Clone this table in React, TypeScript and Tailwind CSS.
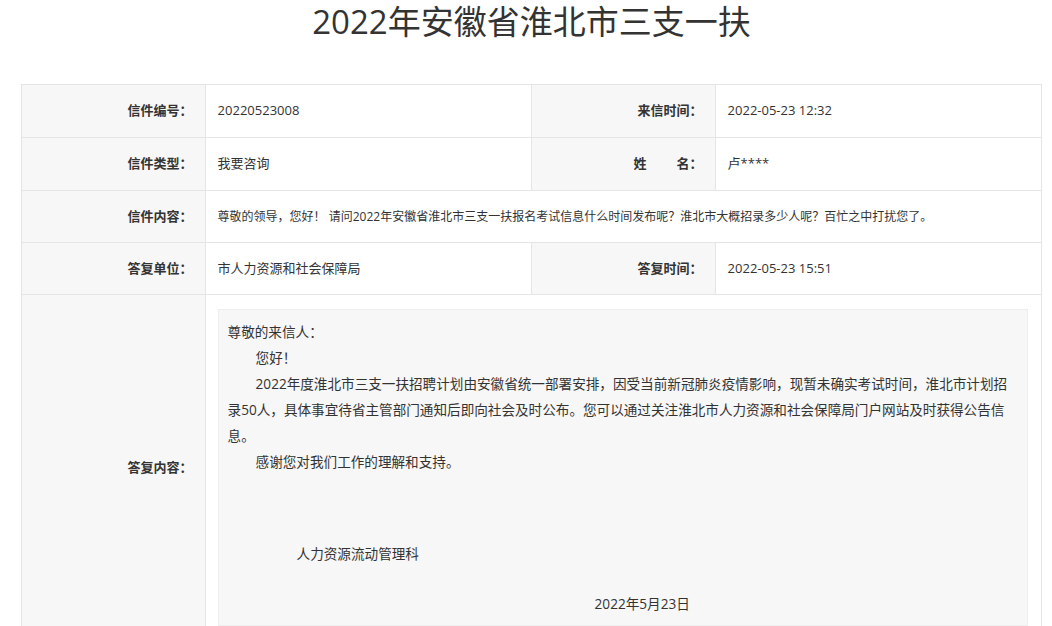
export default function App() {
  const label =
    "bg-[#f7f7f7] text-right pr-[12px] font-bold text-[13px] text-[#333] border border-[#e5e5e5] align-middle whitespace-nowrap";
  const value =
    "bg-white text-left pl-[12px] text-[13px] text-[#333] border border-[#e5e5e5] align-middle whitespace-nowrap";
  return (
    <div className="min-h-[660px] bg-white font-['Open_Sans','Noto_Sans_CJK_SC',sans-serif] text-[#333]">
      <div className="ml-[21px] w-[1021px]">
        <h1 className="text-center text-[33px] leading-[44px] font-normal text-[#333] mb-[40px]">
          2022年安徽省淮北市三支一扶
        </h1>
        <table className="w-full table-fixed border-collapse">
          <colgroup>
            <col className="w-[18%]" />
            <col className="w-[32%]" />
            <col className="w-[18%]" />
            <col className="w-[32%]" />
          </colgroup>
          <tbody>
            <tr className="h-[53px]">
              <td className={label}>信件编号：</td>
              <td className={value}>20220523008</td>
              <td className={label}>来信时间：</td>
              <td className={value}>2022-05-23 12:32</td>
            </tr>
            <tr className="h-[53px]">
              <td className={label}>信件类型：</td>
              <td className={value}>我要咨询</td>
              <td className={label}>
                姓<span className="inline-block w-[30px]"></span>名：
              </td>
              <td className={value}>卢****</td>
            </tr>
            <tr className="h-[52px]">
              <td className={label}>信件内容：</td>
              <td className={value + " !text-[12px]"} colSpan={3}>
                尊敬的领导，您好！ 请问2022年安徽省淮北市三支一扶报名考试信息什么时间发布呢？淮北市大概招录多少人呢？百忙之中打扰您了。
              </td>
            </tr>
            <tr className="h-[52px]">
              <td className={label}>答复单位：</td>
              <td className={value}>市人力资源和社会保障局</td>
              <td className={label}>答复时间：</td>
              <td className={value}>2022-05-23 15:51</td>
            </tr>
            <tr>
              <td className={label}>答复内容：</td>
              <td
                className="bg-white border border-[#e5e5e5] pl-[12px] pr-[13px] pt-[14px] pb-[14px] align-top"
                colSpan={3}
              >
                <div className="bg-[#f7f7f7] border border-[#eeeeee] px-[9px] pt-[9px] pb-[8px] text-[13.6px] leading-[26px] text-[#333] whitespace-nowrap">
                  <div>尊敬的来信人：</div>
                  <div className="pl-[28px]">您好！</div>
                  <div className="pl-[28px]">
                    2022年度淮北市三支一扶招聘计划由安徽省统一部署安排，因受当前新冠肺炎疫情影响，现暂未确实考试时间，淮北市计划招
                  </div>
                  <div>
                    录50人，具体事宜待省主管部门通知后即向社会及时公布。您可以通过关注淮北市人力资源和社会保障局门户网站及时获得公告信
                  </div>
                  <div>息。</div>
                  <div className="pl-[28px]">感谢您对我们工作的理解和支持。</div>
                  <div className="pl-[69px] mt-[66px]">人力资源流动管理科</div>
                  <div className="pl-[367px] mt-[24px]">2022年5月23日</div>
                </div>
              </td>
            </tr>
          </tbody>
        </table>
      </div>
    </div>
  );
}
